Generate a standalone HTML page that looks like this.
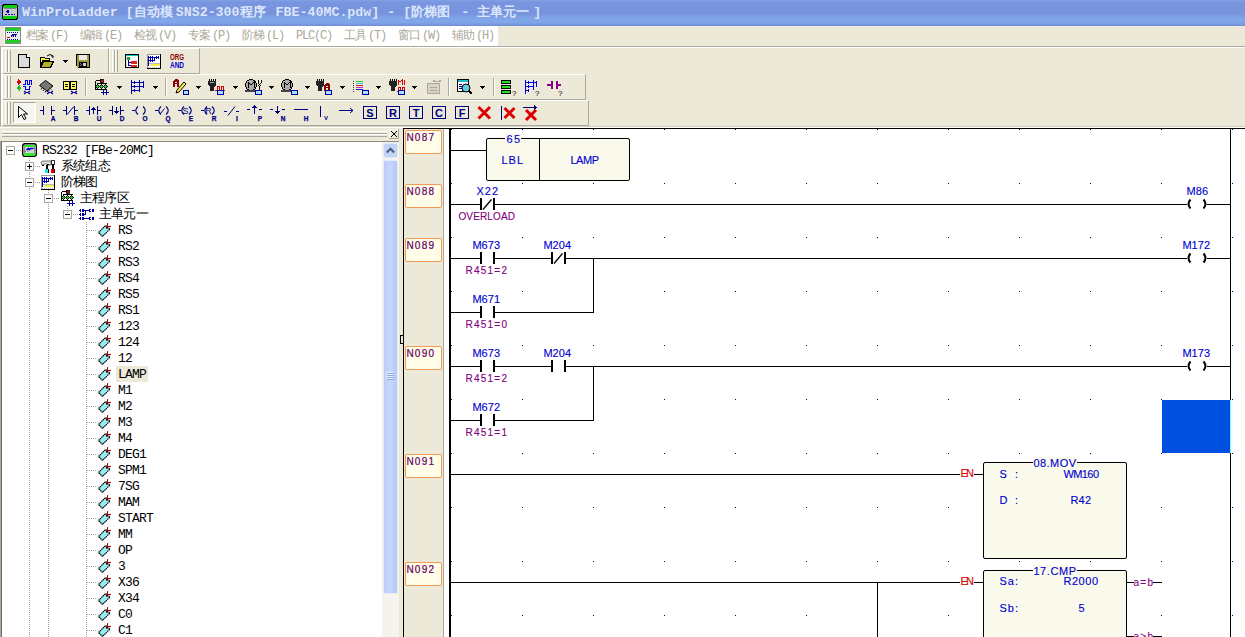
<!DOCTYPE html><html><head><meta charset="utf-8"><style>
*{margin:0;padding:0;box-sizing:border-box}
html,body{width:1245px;height:637px;overflow:hidden;background:#ece9d8;font-family:"Liberation Sans",sans-serif;position:relative}
div,svg,span.a{position:absolute}
span.cj{position:static;display:inline-block;overflow:hidden;vertical-align:top;white-space:nowrap}
svg{overflow:visible}
.tt{font:bold 13.3px/16px "Liberation Mono",monospace;color:#dbe6fa;white-space:pre}
.mi{top:26px;height:20px;font:12px/20px "Liberation Mono",monospace;color:#aca899;white-space:pre;letter-spacing:-1.2px}
.tb{border-top:1px solid #fff;border-left:1px solid #fff;border-right:1px solid #aca899;border-bottom:1px solid #aca899;background:#ece9d8}
.grip{width:4px;border-left:1px solid #fff;border-right:1px solid #aca899}
.sep{width:2px;border-left:1px solid #aca899;border-right:1px solid #fff}
.dd{width:0;height:0;border-left:3px solid transparent;border-right:3px solid transparent;border-top:3px solid #000}
.tr{height:16px;font:13px/16px "Liberation Mono",monospace;color:#000;white-space:pre;letter-spacing:-0.8px}
.lt{font-family:"Liberation Sans",sans-serif}
</style></head><body><div style="left:0px;top:0px;width:1245px;height:26px;background:linear-gradient(#82a2e6 0,#7a95df 2px,#7893dd 14px,#7ea2e6 17px,#80a8ea 22px,#7b9be0 24px,#6f8bd8 26px);"></div>
<svg style="left:2px;top:4px;" width="16" height="16" viewBox="0 0 16 16" shape-rendering="crispEdges"><rect x="0.5" y="0.5" width="15" height="15" rx="2.5" fill="#1c1" stroke="#000"/><rect x="1" y="4" width="14" height="8" fill="#c8c8c8"/><path d="M2 4h12" stroke="#888"/><path d="M4 7h3M5 6h1v2h-1" stroke="#00c" fill="none"/><path d="M3 10h10" stroke="#00c" stroke-dasharray="2 1"/></svg>
<div class="tt" style="left:22px;top:5px">WinProLadder [<span class="cj" style="width:42px">自动模</span>SNS2-300<span class="cj" style="width:28px">程序</span> FBE-40MC.pdw] - [<span class="cj" style="width:42px">阶梯图</span> - <span class="cj" style="width:56px">主单元一</span>]</div>
<div style="left:4px;top:26px;width:494px;height:20px;background:#fff;"></div>
<svg style="left:5px;top:27px;" width="16" height="17" viewBox="0 0 16 17" shape-rendering="crispEdges"><rect x="0.5" y="0.5" width="15" height="16" rx="1" fill="#eee" stroke="#888"/><rect x="1" y="1" width="14" height="3" fill="#2c2"/><rect x="1" y="13" width="14" height="3" fill="#2c2"/><path d="M2 5h12M2 12h12" stroke="#00a" stroke-dasharray="1 1"/><path d="M6 10l2-3h4M8 10v-2M10 10v-2" stroke="#00a" fill="none"/><path d="M2 10h3" stroke="#d00"/></svg>
<div class="mi" style="left:26px"><span class="cj" style="width:24px">档案</span>(F)</div>
<div class="mi" style="left:80px"><span class="cj" style="width:24px">编辑</span>(E)</div>
<div class="mi" style="left:134px"><span class="cj" style="width:24px">检视</span>(V)</div>
<div class="mi" style="left:188px"><span class="cj" style="width:24px">专案</span>(P)</div>
<div class="mi" style="left:242px"><span class="cj" style="width:24px">阶梯</span>(L)</div>
<div class="mi" style="left:296px">PLC(C)</div>
<div class="mi" style="left:344px"><span class="cj" style="width:24px">工具</span>(T)</div>
<div class="mi" style="left:398px"><span class="cj" style="width:24px">窗口</span>(W)</div>
<div class="mi" style="left:452px"><span class="cj" style="width:24px">辅助</span>(H)</div>
<div style="left:0px;top:46px;width:1245px;height:1px;background:#aca899;"></div>
<div style="left:0px;top:47px;width:1245px;height:1px;background:#fff;"></div>
<div style="left:0px;top:47px;width:1px;height:80px;background:#aca899;"></div>
<div style="left:1px;top:47px;width:1px;height:80px;background:#fff;"></div>
<div class="tb" style="left:2px;top:48px;width:107px;height:26px"></div>
<div style="left:5px;top:50px;width:1px;height:22px;background:#fff;"></div>
<div style="left:7px;top:50px;width:1px;height:22px;background:#aca899;"></div>
<div style="left:8px;top:50px;width:1px;height:22px;background:#fff;"></div>
<div style="left:10px;top:50px;width:1px;height:22px;background:#aca899;"></div>
<div class="tb" style="left:109px;top:48px;width:91px;height:26px"></div>
<div style="left:112px;top:50px;width:1px;height:22px;background:#fff;"></div>
<div style="left:114px;top:50px;width:1px;height:22px;background:#aca899;"></div>
<div style="left:115px;top:50px;width:1px;height:22px;background:#fff;"></div>
<div style="left:117px;top:50px;width:1px;height:22px;background:#aca899;"></div>
<div class="tb" style="left:2px;top:74px;width:584px;height:26px"></div>
<div style="left:5px;top:76px;width:1px;height:22px;background:#fff;"></div>
<div style="left:7px;top:76px;width:1px;height:22px;background:#aca899;"></div>
<div style="left:8px;top:76px;width:1px;height:22px;background:#fff;"></div>
<div style="left:10px;top:76px;width:1px;height:22px;background:#aca899;"></div>
<div class="tb" style="left:2px;top:100px;width:587px;height:26px"></div>
<div style="left:5px;top:102px;width:1px;height:22px;background:#fff;"></div>
<div style="left:7px;top:102px;width:1px;height:22px;background:#aca899;"></div>
<div style="left:8px;top:102px;width:1px;height:22px;background:#fff;"></div>
<div style="left:10px;top:102px;width:1px;height:22px;background:#aca899;"></div>
<div style="left:0px;top:126px;width:1245px;height:1px;background:#d8d2bd;"></div>
<div style="left:0px;top:127px;width:1245px;height:1px;background:#fff;"></div>
<svg style="left:18px;top:54px;" width="13" height="15" viewBox="0 0 13 15" shape-rendering="crispEdges"><path d="M0.5 0.5H8.5L11.5 3.5V13.5H0.5Z" fill="#d8d8d8" stroke="#000"/><path d="M2 3h1M4 5h1M2 7h1M6 7h1M4 9h1M8 9h1M2 11h1M6 11h1M8 6h1" stroke="#f4f4f4"/><path d="M8.5 1V3.5H11" fill="#fff" stroke="#000"/><path d="M9 1h1v1h1v1h-2z" fill="#fff"/><path d="M1 13.5h11M11.5 4v10" stroke="#000"/></svg>
<svg style="left:40px;top:54px;" width="16" height="16" viewBox="0 0 16 16" shape-rendering="crispEdges"><path d="M0.5 3.5h4l1 1h4v2h-7l-2 7z" fill="#ffff33" stroke="#000"/><path d="M0.5 13.5l3-6h10l-3 6z" fill="#b8b020" stroke="#000"/><path d="M7 2q3-3 6 0M12 1v2h2" stroke="#000" fill="none" shape-rendering="auto"/></svg>
<svg style="left:63px;top:60px;" width="5" height="3" viewBox="0 0 5 3" shape-rendering="crispEdges"><path d="M0 0h5v1h-1v1h-1v1h-1v-1h-1v-1h-1z" fill="#000"/></svg>
<svg style="left:76px;top:54px;" width="16" height="16" viewBox="0 0 16 16" shape-rendering="crispEdges"><path d="M0 0h14v14h-12l-2-2z" fill="#000"/><rect x="1" y="1" width="12" height="12" fill="#9c9a3c"/><rect x="3" y="1" width="8" height="5" fill="#e8e8e8"/><rect x="3" y="8" width="8" height="5" fill="#000"/><rect x="7" y="9" width="3" height="3" fill="#ccc"/><path d="M4 9h1M5 10h1M4 11h1" stroke="#888"/></svg>
<svg style="left:125px;top:54px;" width="16" height="16" viewBox="0 0 16 16" shape-rendering="crispEdges"><rect x="0.5" y="0.5" width="13" height="13" fill="#fff" stroke="#000"/><rect x="1" y="1" width="12" height="1" fill="#00c8c8"/><rect x="1" y="2" width="1" height="11" fill="#e0e0e0"/><rect x="2" y="3" width="3" height="3" fill="#22aa22"/><path d="M3.5 6v6M3.5 8.5h3M3.5 11.5h3" stroke="#0000aa" fill="none"/><rect x="6" y="7" width="6" height="3" fill="#dd2222"/><rect x="6" y="10.5" width="6" height="2.5" fill="#dd2222"/></svg>
<svg style="left:147px;top:54px;" width="14" height="15" viewBox="0 0 14 15" shape-rendering="crispEdges"><rect x="0" y="0" width="14" height="15" fill="#fff"/><path d="M0.5 0v14M0 0.5h13" stroke="#999"/><path d="M13.5 0v15M0 14.5h14" stroke="#000"/><path d="M1 13.5h12" stroke="#bbb" stroke-dasharray="1 1"/><path d="M1.5 2V12M1 3.5H12M3.5 2V5M5.5 2V5M9.5 2V5M11.5 2V5M1 6.5H7.5M7.5 3V7M3.5 5V8M5.5 5V8" stroke="#0000aa" fill="none"/><rect x="3" y="10" width="10" height="2" fill="#f0f050"/><path d="M2 9.5h11" stroke="#bbb"/></svg>
<svg style="left:169px;top:53px;" width="18" height="16" viewBox="0 0 18 16" shape-rendering="crispEdges"><g font-family="Liberation Sans" font-weight="bold" font-size="8.5" shape-rendering="auto"><text x="1" y="7" fill="#8b0000" textLength="14" lengthAdjust="spacingAndGlyphs">ORG</text><text x="1" y="15" fill="#0000cc" textLength="14" lengthAdjust="spacingAndGlyphs">AND</text></g></svg>
<svg style="left:16px;top:79px;" width="16" height="16" viewBox="0 0 16 16" shape-rendering="crispEdges"><path d="M1 3h3M3 1.5l2 1.5-2 1.5z" stroke="#dd0000" fill="#dd0000" stroke-width="1.3"/><path d="M2 9h3M3 7.5l-2 1.5 2 1.5z" stroke="#22bb22" fill="#22bb22" stroke-width="1.3"/><path d="M7 5.5h2v-4h2v4h2v-4h2v4" stroke="#0000ee" fill="none"/><path d="M7 7.5h2v3h4v-3h2" stroke="#0000ee" fill="none"/><path d="M8 12l2 1.5-2 1.5M14 12l-2 1.5 2 1.5M10 13.5h2" stroke="#000099" stroke-width="1.2" fill="none" shape-rendering="auto"/></svg>
<svg style="left:39px;top:79px;" width="16" height="16" viewBox="0 0 16 16" shape-rendering="crispEdges"><path d="M0.5 6.5l6-5 7.5 5.5-6 5z" fill="#777" stroke="#000" shape-rendering="auto"/><path d="M3 9l-1 1.5M5 10.5l-1 1.5M7 12l-1 1.5M9.5 11l1 1M11.5 9.5l1 1" stroke="#000" shape-rendering="auto"/><path d="M8 12l2 1.5-2 1.5M14 12l-2 1.5 2 1.5M10 13.5h2" stroke="#000099" stroke-width="1.2" fill="none" shape-rendering="auto"/></svg>
<svg style="left:63px;top:81px;" width="16" height="16" viewBox="0 0 16 16" shape-rendering="crispEdges"><path d="M0.5 0.5h6v8h-6zM7.5 0.5h6v8h-6z" fill="#ffff66" stroke="#000"/><path d="M2 3h3M2 5h3M9 3h3M9 5h3" stroke="#000"/><path d="M8 10l2 1.5-2 1.5M14 10l-2 1.5 2 1.5M10 11.5h2" stroke="#000099" stroke-width="1.2" fill="none" shape-rendering="auto"/></svg>
<div style="left:85px;top:78px;width:1px;height:18px;background:#aca899;"></div>
<div style="left:86px;top:78px;width:1px;height:18px;background:#fff;"></div>
<svg style="left:94px;top:79px;" width="16" height="16" viewBox="0 0 16 16" shape-rendering="crispEdges"><path d="M1.5 2v8.5h11M1.5 1.5h5M3 4.5h9.5M7.5 2.5v2M3.5 4.5v6M7.5 4.5v6M11.5 4.5v6" stroke="#000" fill="none"/><rect x="6" y="0" width="3" height="3" fill="#d00" stroke="#000" stroke-width="0.8"/><circle cx="3.5" cy="7.5" r="1.6" fill="#22cc22" stroke="#000"/><circle cx="7.5" cy="7.5" r="1.6" fill="#22cc22" stroke="#000"/><circle cx="11.5" cy="7.5" r="1.6" fill="#22cc22" stroke="#000"/><path d="M7 13.5h8M9.5 11v5M12.5 11v5" stroke="#000099"/></svg>
<svg style="left:117px;top:86px;" width="5" height="3" viewBox="0 0 5 3" shape-rendering="crispEdges"><path d="M0 0h5v1h-1v1h-1v1h-1v-1h-1v-1h-1z" fill="#000"/></svg>
<svg style="left:130px;top:79px;" width="16" height="16" viewBox="0 0 16 16" shape-rendering="crispEdges"><path d="M1 1v14M1 3h3M1 7h3M1 11h3M4 2v3M4 6v3M4 10v3M5 3h4M5 7h4M5 11h4M9 1v12M10 3h3M10 7h3M13 2v7" stroke="#0000aa" fill="none"/></svg>
<svg style="left:153px;top:86px;" width="5" height="3" viewBox="0 0 5 3" shape-rendering="crispEdges"><path d="M0 0h5v1h-1v1h-1v1h-1v-1h-1v-1h-1z" fill="#000"/></svg>
<div style="left:165px;top:78px;width:1px;height:18px;background:#aca899;"></div>
<div style="left:166px;top:78px;width:1px;height:18px;background:#fff;"></div>
<svg style="left:173px;top:79px;" width="16" height="16" viewBox="0 0 16 16" shape-rendering="crispEdges"><path d="M0 8V2l2-2h2l2 2v6h-2v-3h-2v3zM2 2.5v1h2v-1z" fill="#8b0000" fill-rule="evenodd"/><path d="M4 11l7-8 2 2-7 8-3 1z" fill="#ffee44" stroke="#000" shape-rendering="auto"/><rect x="10.5" y="11.5" width="5" height="4" fill="#aaddff" stroke="#000099"/></svg>
<svg style="left:196px;top:86px;" width="5" height="3" viewBox="0 0 5 3" shape-rendering="crispEdges"><path d="M0 0h5v1h-1v1h-1v1h-1v-1h-1v-1h-1z" fill="#000"/></svg>
<svg style="left:208px;top:79px;" width="18" height="16" viewBox="0 0 18 16" shape-rendering="crispEdges"><path d="M1 0v2M3 0v2M5 0v2M7 0v2" stroke="#000"/><path d="M0 2h8v4l-2 2v4h-4v-4l-2-2z" fill="#222"/><path d="M2 3h4" stroke="#aaa"/><path d="M7 11h2v-4h2v4h2v-4h2v4h2" stroke="#dd0000" fill="none"/><rect x="9.5" y="11.5" width="6" height="4" fill="#aaddff" stroke="#000099"/></svg>
<svg style="left:233px;top:86px;" width="5" height="3" viewBox="0 0 5 3" shape-rendering="crispEdges"><path d="M0 0h5v1h-1v1h-1v1h-1v-1h-1v-1h-1z" fill="#000"/></svg>
<svg style="left:245px;top:79px;" width="17" height="16" viewBox="0 0 17 16" shape-rendering="crispEdges"><circle cx="6" cy="6" r="5.5" fill="#aaa" stroke="#000"/><path d="M3 9v-6l3 3 3-3v6" stroke="#000" fill="none"/><rect x="0" y="11" width="12" height="2" fill="#444"/><path d="M13 1v3M16 1v3M13 4l3 3M16 4l-3 3M14.5 7v5" stroke="#000" fill="none"/><rect x="10.5" y="11.5" width="6" height="4" fill="#aaddff" stroke="#000099"/></svg>
<svg style="left:269px;top:86px;" width="5" height="3" viewBox="0 0 5 3" shape-rendering="crispEdges"><path d="M0 0h5v1h-1v1h-1v1h-1v-1h-1v-1h-1z" fill="#000"/></svg>
<svg style="left:281px;top:79px;" width="17" height="16" viewBox="0 0 17 16" shape-rendering="crispEdges"><circle cx="6" cy="6" r="5.5" fill="#aaa" stroke="#000"/><path d="M3 9v-6l3 3 3-3v6" stroke="#000" fill="none"/><rect x="0" y="11" width="12" height="2" fill="#444"/><rect x="10.5" y="11.5" width="6" height="4" fill="#aaddff" stroke="#000099"/></svg>
<svg style="left:305px;top:86px;" width="5" height="3" viewBox="0 0 5 3" shape-rendering="crispEdges"><path d="M0 0h5v1h-1v1h-1v1h-1v-1h-1v-1h-1z" fill="#000"/></svg>
<svg style="left:316px;top:79px;" width="16" height="16" viewBox="0 0 16 16" shape-rendering="crispEdges"><path d="M1 0v2M3 0v2M5 0v2M7 0v2" stroke="#000"/><path d="M0 2h8v4l-2 2v4h-4v-4l-2-2z" fill="#222"/><path d="M8 12V6l2-2h2l2 2v6h-2v-3h-2v3zM10 6.5v1h2v-1z" fill="#8b0000" fill-rule="evenodd"/><rect x="9.5" y="11.5" width="6" height="4" fill="#aaddff" stroke="#000099"/></svg>
<svg style="left:340px;top:86px;" width="5" height="3" viewBox="0 0 5 3" shape-rendering="crispEdges"><path d="M0 0h5v1h-1v1h-1v1h-1v-1h-1v-1h-1z" fill="#000"/></svg>
<svg style="left:353px;top:79px;" width="16" height="16" viewBox="0 0 16 16" shape-rendering="crispEdges"><path d="M0 2h1M0 4h1M0 6h1M0 8h1M0 10h1M0 12h1" stroke="#333"/><path d="M3 2h7" stroke="#22cc22"/><path d="M3 4h7" stroke="#22cccc"/><path d="M3 6h7" stroke="#dd2222"/><path d="M3 8h7" stroke="#cc22cc"/><path d="M3 10h7" stroke="#2222cc"/><rect x="9.5" y="11.5" width="6" height="4" fill="#aaddff" stroke="#000099"/></svg>
<svg style="left:376px;top:86px;" width="5" height="3" viewBox="0 0 5 3" shape-rendering="crispEdges"><path d="M0 0h5v1h-1v1h-1v1h-1v-1h-1v-1h-1z" fill="#000"/></svg>
<svg style="left:389px;top:79px;" width="17" height="16" viewBox="0 0 17 16" shape-rendering="crispEdges"><path d="M1 0v2M3 0v2M5 0v2M7 0v2" stroke="#000"/><path d="M0 2h8v4l-2 2v4h-4v-4l-2-2z" fill="#222"/><path d="M9 6v-5l2 2 2-2v5M15 1v5" stroke="#dd0000" fill="none"/><path d="M8 12h1v-4h2v4h2v-4h2v4h1" stroke="#dd0000" fill="none"/><rect x="9.5" y="11.5" width="6" height="4" fill="#aaddff" stroke="#000099"/></svg>
<svg style="left:412px;top:86px;" width="5" height="3" viewBox="0 0 5 3" shape-rendering="crispEdges"><path d="M0 0h5v1h-1v1h-1v1h-1v-1h-1v-1h-1z" fill="#000"/></svg>
<svg style="left:427px;top:79px;" width="16" height="16" viewBox="0 0 16 16" shape-rendering="crispEdges"><rect x="0.5" y="4.5" width="12" height="10" fill="#d8d4c4" stroke="#aca899"/><path d="M3 8h7M3 11h7" stroke="#aca899"/><path d="M6 1l2 1-2 1M14 1l-2 1 2 1M8 2h4" stroke="#aca899" fill="none"/></svg>
<div style="left:448px;top:78px;width:1px;height:18px;background:#aca899;"></div>
<div style="left:449px;top:78px;width:1px;height:18px;background:#fff;"></div>
<svg style="left:457px;top:79px;" width="16" height="16" viewBox="0 0 16 16" shape-rendering="crispEdges"><rect x="0.5" y="0.5" width="11" height="12" fill="#fff" stroke="#000"/><rect x="1" y="1" width="10" height="2" fill="#22bbcc"/><path d="M2 5h3M2 7h3M2 9h3" stroke="#0000aa"/><circle cx="9" cy="9" r="4" fill="#66ccdd" stroke="#000" shape-rendering="auto"/><path d="M12 12l3 3" stroke="#000" stroke-width="2"/></svg>
<svg style="left:480px;top:86px;" width="5" height="3" viewBox="0 0 5 3" shape-rendering="crispEdges"><path d="M0 0h5v1h-1v1h-1v1h-1v-1h-1v-1h-1z" fill="#000"/></svg>
<div style="left:493px;top:78px;width:1px;height:18px;background:#aca899;"></div>
<div style="left:494px;top:78px;width:1px;height:18px;background:#fff;"></div>
<svg style="left:501px;top:80px;" width="16" height="16" viewBox="0 0 16 16" shape-rendering="crispEdges"><rect x="0.5" y="0.5" width="9" height="3" fill="#22dd22" stroke="#000"/><rect x="0.5" y="5.5" width="9" height="3" fill="#22dd22" stroke="#000"/><rect x="0.5" y="10.5" width="9" height="3" fill="#22dd22" stroke="#000"/><text x="11" y="16" font-size="8" fill="#000" font-family="Liberation Sans" shape-rendering="auto">?</text></svg>
<svg style="left:524px;top:80px;" width="16" height="16" viewBox="0 0 16 16" shape-rendering="crispEdges"><path d="M1 0v14M1 2h3M1 6h3M1 10h3M4 1v3M4 5v3M4 9v3M5 2h4M5 6h4M9 0v10M10 2h2M12 1v6" stroke="#0000ee" fill="none"/><text x="11" y="16" font-size="8" fill="#000" font-family="Liberation Sans" shape-rendering="auto">?</text></svg>
<svg style="left:547px;top:80px;" width="16" height="16" viewBox="0 0 16 16" shape-rendering="crispEdges"><path d="M0 5h4M10 5h4M4.5 1v8M9.5 1v8" stroke="#8b008b" stroke-width="2" fill="none"/><text x="11" y="16" font-size="8" fill="#000" font-family="Liberation Sans" shape-rendering="auto">?</text></svg>
<div style="left:13px;top:102px;width:23px;height:21px;background:#f6f5f0;border-top:1px solid #aca899;border-left:1px solid #aca899;border-right:1px solid #fff;border-bottom:1px solid #fff"></div>
<svg style="left:18px;top:106px;" width="16" height="16" viewBox="0 0 16 16" shape-rendering="crispEdges"><path d="M0.5 0.5v11l3-3 2.5 5 2-1-2.5-4.5h4z" fill="#fff" stroke="#000" shape-rendering="auto"/></svg>
<svg style="left:40px;top:105px;" width="16" height="16" viewBox="0 0 16 16" shape-rendering="crispEdges"><path d="M0 5.5h3M11 5.5h4" stroke="#000080"/><rect x="3" y="1" width="1" height="9" fill="#000080"/><rect x="11" y="1" width="1" height="9" fill="#000080"/><text x="13" y="15.6" font-size="6.5" font-weight="bold" fill="#000080" text-anchor="middle" font-family="Liberation Sans" stroke="#000080" stroke-width="0.25">A</text></svg>
<svg style="left:63px;top:105px;" width="16" height="16" viewBox="0 0 16 16" shape-rendering="crispEdges"><path d="M0 5.5h3M11 5.5h4" stroke="#000080"/><rect x="3" y="1" width="1" height="9" fill="#000080"/><rect x="11" y="1" width="1" height="9" fill="#000080"/><path d="M4 9.5l7-8" stroke="#000080" shape-rendering="auto"/><text x="13" y="15.6" font-size="6.5" font-weight="bold" fill="#000080" text-anchor="middle" font-family="Liberation Sans" stroke="#000080" stroke-width="0.25">B</text></svg>
<svg style="left:86px;top:105px;" width="16" height="16" viewBox="0 0 16 16" shape-rendering="crispEdges"><path d="M0 5.5h3M11 5.5h4" stroke="#000080"/><rect x="3" y="1" width="1" height="9" fill="#000080"/><rect x="11" y="1" width="1" height="9" fill="#000080"/><path d="M7.5 3v6M5.5 5l2-2 2 2" stroke="#000080" fill="none"/><text x="13" y="15.6" font-size="6.5" font-weight="bold" fill="#000080" text-anchor="middle" font-family="Liberation Sans" stroke="#000080" stroke-width="0.25">U</text></svg>
<svg style="left:109px;top:105px;" width="16" height="16" viewBox="0 0 16 16" shape-rendering="crispEdges"><path d="M0 5.5h3M11 5.5h4" stroke="#000080"/><rect x="3" y="1" width="1" height="9" fill="#000080"/><rect x="11" y="1" width="1" height="9" fill="#000080"/><path d="M7.5 2v6M5.5 6l2 2 2-2" stroke="#000080" fill="none"/><text x="13" y="15.6" font-size="6.5" font-weight="bold" fill="#000080" text-anchor="middle" font-family="Liberation Sans" stroke="#000080" stroke-width="0.25">D</text></svg>
<svg style="left:132px;top:105px;" width="16" height="16" viewBox="0 0 16 16" shape-rendering="crispEdges"><path d="M0 5.5h3M6 1.5q-4.5 4 0 8M11 1.5q4.5 4 0 8" stroke="#000080" fill="none" stroke-width="1.2" shape-rendering="auto"/><text x="13" y="15.6" font-size="6.5" font-weight="bold" fill="#000080" text-anchor="middle" font-family="Liberation Sans" stroke="#000080" stroke-width="0.25">O</text></svg>
<svg style="left:155px;top:105px;" width="16" height="16" viewBox="0 0 16 16" shape-rendering="crispEdges"><path d="M0 5.5h3M6 1.5q-4.5 4 0 8M11 1.5q4.5 4 0 8" stroke="#000080" fill="none" stroke-width="1.2" shape-rendering="auto"/><path d="M5.5 8.5l4-5" stroke="#000080" shape-rendering="auto"/><text x="13" y="15.6" font-size="6.5" font-weight="bold" fill="#000080" text-anchor="middle" font-family="Liberation Sans" stroke="#000080" stroke-width="0.25">Q</text></svg>
<svg style="left:178px;top:105px;" width="16" height="16" viewBox="0 0 16 16" shape-rendering="crispEdges"><path d="M0 5.5h3M6 1.5q-4.5 4 0 8M11 1.5q4.5 4 0 8" stroke="#000080" fill="none" stroke-width="1.2" shape-rendering="auto"/><text x="7.5" y="9" font-size="9" fill="#000080" text-anchor="middle" font-family="Liberation Sans">S</text><text x="13" y="15.6" font-size="6.5" font-weight="bold" fill="#000080" text-anchor="middle" font-family="Liberation Sans" stroke="#000080" stroke-width="0.25">E</text></svg>
<svg style="left:201px;top:105px;" width="16" height="16" viewBox="0 0 16 16" shape-rendering="crispEdges"><path d="M0 5.5h3M6 1.5q-4.5 4 0 8M11 1.5q4.5 4 0 8" stroke="#000080" fill="none" stroke-width="1.2" shape-rendering="auto"/><text x="7.5" y="9" font-size="9" fill="#000080" text-anchor="middle" font-family="Liberation Sans">R</text><text x="13" y="15.6" font-size="6.5" font-weight="bold" fill="#000080" text-anchor="middle" font-family="Liberation Sans" stroke="#000080" stroke-width="0.25">R</text></svg>
<svg style="left:224px;top:105px;" width="16" height="16" viewBox="0 0 16 16" shape-rendering="crispEdges"><path d="M0 6.5h3M12 6.5h3" stroke="#000080"/><path d="M4 10.5l7-9" stroke="#000080" shape-rendering="auto"/><text x="13" y="15.6" font-size="6.5" font-weight="bold" fill="#000080" text-anchor="middle" font-family="Liberation Sans" stroke="#000080" stroke-width="0.25">I</text></svg>
<svg style="left:247px;top:105px;" width="16" height="16" viewBox="0 0 16 16" shape-rendering="crispEdges"><path d="M0 4.5h3M12 4.5h3M7.5 1v8M5.5 3l2-2 2 2" stroke="#000080" fill="none"/><text x="13" y="15.6" font-size="6.5" font-weight="bold" fill="#000080" text-anchor="middle" font-family="Liberation Sans" stroke="#000080" stroke-width="0.25">P</text></svg>
<svg style="left:270px;top:105px;" width="16" height="16" viewBox="0 0 16 16" shape-rendering="crispEdges"><path d="M0 4.5h3M12 4.5h3M7.5 1v7M5.5 6l2 2 2-2" stroke="#000080" fill="none"/><text x="13" y="15.6" font-size="6.5" font-weight="bold" fill="#000080" text-anchor="middle" font-family="Liberation Sans" stroke="#000080" stroke-width="0.25">N</text></svg>
<svg style="left:293px;top:105px;" width="16" height="16" viewBox="0 0 16 16" shape-rendering="crispEdges"><path d="M1 4.5h14" stroke="#000080"/><text x="13" y="15.6" font-size="6.5" font-weight="bold" fill="#000080" text-anchor="middle" font-family="Liberation Sans" stroke="#000080" stroke-width="0.25">H</text></svg>
<svg style="left:316px;top:105px;" width="16" height="16" viewBox="0 0 16 16" shape-rendering="crispEdges"><path d="M4.5 1v11" stroke="#000080"/><text x="10" y="14.5" font-size="6" font-weight="bold" fill="#000080" text-anchor="middle" font-family="Liberation Sans">V</text></svg>
<svg style="left:339px;top:105px;" width="16" height="16" viewBox="0 0 16 16" shape-rendering="crispEdges"><path d="M0 5.5h14M11 3l3 2.5-3 2.5" stroke="#000080" fill="none" shape-rendering="auto"/></svg>
<svg style="left:362px;top:105px;" width="16" height="16" viewBox="0 0 16 16" shape-rendering="crispEdges"><rect x="1.5" y="1.5" width="13" height="12" fill="none" stroke="#000080"/><text x="8" y="12" font-size="11" font-weight="bold" fill="#000080" text-anchor="middle" font-family="Liberation Sans">S</text></svg>
<svg style="left:385px;top:105px;" width="16" height="16" viewBox="0 0 16 16" shape-rendering="crispEdges"><rect x="1.5" y="1.5" width="13" height="12" fill="none" stroke="#000080"/><text x="8" y="12" font-size="11" font-weight="bold" fill="#000080" text-anchor="middle" font-family="Liberation Sans">R</text></svg>
<svg style="left:408px;top:105px;" width="16" height="16" viewBox="0 0 16 16" shape-rendering="crispEdges"><rect x="1.5" y="1.5" width="13" height="12" fill="none" stroke="#000080"/><text x="8" y="12" font-size="11" font-weight="bold" fill="#000080" text-anchor="middle" font-family="Liberation Sans">T</text></svg>
<svg style="left:431px;top:105px;" width="16" height="16" viewBox="0 0 16 16" shape-rendering="crispEdges"><rect x="1.5" y="1.5" width="13" height="12" fill="none" stroke="#000080"/><text x="8" y="12" font-size="11" font-weight="bold" fill="#000080" text-anchor="middle" font-family="Liberation Sans">C</text></svg>
<svg style="left:454px;top:105px;" width="16" height="16" viewBox="0 0 16 16" shape-rendering="crispEdges"><rect x="1.5" y="1.5" width="13" height="12" fill="none" stroke="#000080"/><text x="8" y="12" font-size="11" font-weight="bold" fill="#000080" text-anchor="middle" font-family="Liberation Sans">F</text></svg>
<svg style="left:477px;top:105px;" width="16" height="16" viewBox="0 0 16 16" shape-rendering="crispEdges"><path d="M1.5 2l11.5 11.5M13 2l-11.5 11.5" stroke="#dd0000" stroke-width="3" shape-rendering="auto"/></svg>
<svg style="left:500px;top:105px;" width="16" height="16" viewBox="0 0 16 16" shape-rendering="crispEdges"><path d="M1.5 1v14" stroke="#000080"/><path d="M4.5 3l10 10M14.5 3l-10 10" stroke="#dd0000" stroke-width="3" shape-rendering="auto"/></svg>
<svg style="left:523px;top:105px;" width="16" height="16" viewBox="0 0 16 16" shape-rendering="crispEdges"><path d="M0 2.5h13M11 0.5l2 2-2 2" stroke="#000080" fill="none"/><path d="M3 5l10 10M13 5l-10 10" stroke="#dd0000" stroke-width="3" shape-rendering="auto"/></svg>
<div style="left:0px;top:128px;width:400px;height:13px;background:#ece9d8;"></div>
<div style="left:2px;top:131px;width:385px;height:1px;background:#fff;"></div>
<div style="left:2px;top:133px;width:385px;height:1px;background:#aca899;"></div>
<div style="left:2px;top:134px;width:385px;height:1px;background:#fff;"></div>
<div style="left:2px;top:136px;width:385px;height:1px;background:#aca899;"></div>
<svg style="left:389px;top:129px;" width="10" height="10" viewBox="0 0 10 10" shape-rendering="crispEdges"><rect x="0" y="0" width="10" height="10" fill="#ece9d8"/><path d="M0 0h9M0 0v9" stroke="#fff" fill="none"/><path d="M9.5 0v10M0 9.5h10" stroke="#aca899" fill="none"/><rect x="2" y="2" width="1" height="1" fill="#000"/><rect x="7" y="2" width="1" height="1" fill="#000"/><rect x="3" y="3" width="1" height="1" fill="#000"/><rect x="6" y="3" width="1" height="1" fill="#000"/><rect x="4" y="4" width="1" height="1" fill="#000"/><rect x="5" y="4" width="1" height="1" fill="#000"/><rect x="5" y="5" width="1" height="1" fill="#000"/><rect x="4" y="5" width="1" height="1" fill="#000"/><rect x="6" y="6" width="1" height="1" fill="#000"/><rect x="3" y="6" width="1" height="1" fill="#000"/><rect x="7" y="7" width="1" height="1" fill="#000"/><rect x="2" y="7" width="1" height="1" fill="#000"/></svg>
<div style="left:0px;top:142px;width:381px;height:495px;background:#fff;"></div>
<div style="left:0px;top:141px;width:1px;height:496px;background:#aca899;"></div>
<div style="left:1px;top:141px;width:1px;height:496px;background:#716f64;"></div>
<svg style="left:0;top:0" width="400" height="637" viewBox="0 0 400 637" shape-rendering="crispEdges"><defs><clipPath id="tc"><rect x="2" y="142" width="379" height="495"/></clipPath></defs><g clip-path="url(#tc)"><rect x="6.5" y="146.5" width="8" height="8" fill="#fff" stroke="#aca899"/><path d="M8 150.5h5" stroke="#000"/><path d="M16 150.5H22" stroke="#a0a0a0" stroke-dasharray="1 1"/><g transform="translate(22,143)"><rect x="0.7" y="0.7" width="13.6" height="12.6" rx="2.2" fill="#fff" stroke="#000" stroke-width="1.4" shape-rendering="auto"/><rect x="2" y="1.5" width="11" height="2.5" fill="#33e633"/><rect x="2" y="4" width="11" height="6" fill="#d4d4d4"/><path d="M2.5 4v6M12.5 4v6" stroke="#888"/><path d="M4.5 7l2-1.5 1 1 1-1h3" stroke="#0000ee" stroke-width="1.6" fill="none" shape-rendering="auto"/><rect x="2" y="8" width="2" height="1" fill="#d44"/><rect x="5" y="8" width="2" height="1" fill="#5dd"/><rect x="2" y="10" width="11" height="2.5" fill="#33e633"/></g><path d="M29.5 158V637" stroke="#a0a0a0" stroke-dasharray="1 1"/><rect x="25.5" y="162.5" width="8" height="8" fill="#fff" stroke="#aca899"/><path d="M27 166.5h5" stroke="#000"/><path d="M29.5 164v5" stroke="#000"/><path d="M35 166.5H41" stroke="#a0a0a0" stroke-dasharray="1 1"/><g transform="translate(41,160)"><path d="M0 2l2-1h8v4h-3l-1-1h-3l-1 1h-1z" fill="#e0e0e0" stroke="#555" stroke-width="0.8" shape-rendering="auto"/><path d="M1 5h2M6 4h2" stroke="#000"/><rect x="10" y="0" width="3" height="4" fill="#fff" stroke="#000" stroke-width="0.8"/><rect x="5" y="5" width="2" height="4" fill="#000"/><rect x="11" y="4" width="2" height="5" fill="#000"/><rect x="4" y="9" width="3" height="4" fill="#22e0e8"/><rect x="7" y="9" width="1" height="4" fill="#000"/><rect x="10" y="9" width="3" height="4" fill="#dd0000"/><rect x="13" y="9" width="1" height="4" fill="#400"/></g><rect x="25.5" y="178.5" width="8" height="8" fill="#fff" stroke="#aca899"/><path d="M27 182.5h5" stroke="#000"/><path d="M35 182.5H41" stroke="#a0a0a0" stroke-dasharray="1 1"/><g transform="translate(41,175)"><rect x="0" y="0" width="14" height="15" fill="#fff"/><path d="M0.5 0v14M0 0.5h13" stroke="#999"/><path d="M13.5 0v15M0 14.5h14" stroke="#000"/><path d="M1 13.5h12" stroke="#bbb" stroke-dasharray="1 1"/><path d="M1.5 2V12M1 3.5H12M3.5 2V5M5.5 2V5M9.5 2V5M11.5 2V5M1 6.5H7.5M7.5 3V7M3.5 5V8M5.5 5V8" stroke="#0000aa" fill="none"/><rect x="3" y="10" width="10" height="2" fill="#f0f050"/><path d="M2 9.5h11" stroke="#bbb"/></g><path d="M48.5 190V637" stroke="#a0a0a0" stroke-dasharray="1 1"/><rect x="44.5" y="194.5" width="8" height="8" fill="#fff" stroke="#aca899"/><path d="M46 198.5h5" stroke="#000"/><path d="M54 198.5H60" stroke="#a0a0a0" stroke-dasharray="1 1"/><g transform="translate(60,190)"><path d="M1.5 2v8.5h11M1.5 1.5h5M3 4.5h9.5M7.5 2.5v2M3.5 4.5v6M7.5 4.5v6M11.5 4.5v6" stroke="#000" fill="none"/><rect x="6" y="0" width="3" height="3" fill="#d00" stroke="#000" stroke-width="0.8"/><circle cx="3.5" cy="7.5" r="1.6" fill="#22cc22" stroke="#000"/><circle cx="7.5" cy="7.5" r="1.6" fill="#22cc22" stroke="#000"/><circle cx="11.5" cy="7.5" r="1.6" fill="#22cc22" stroke="#000"/><path d="M7 13.5h8M9.5 11v5M12.5 11v5" stroke="#000099"/></g><rect x="63.5" y="210.5" width="8" height="8" fill="#fff" stroke="#aca899"/><path d="M65 214.5h5" stroke="#000"/><path d="M73 214.5H79" stroke="#a0a0a0" stroke-dasharray="1 1"/><g transform="translate(79,209)"><g stroke="#000099" fill="none" stroke-width="1.4"><path d="M1.5 0v3M1.5 4v3M1.5 8v3M0 1.5h1M0 5.5h1M0 9.5h1M4 0v3M4 4v3M4 8v3M4 1.5h7M4 5.5h2.5M6.5 1.5v4M4 9.5h7M11.5 0.5h-1v2h1M13 0.5h1v2h-1M11.5 8.5h-1v2h1M13 8.5h1v2h-1"/></g></g><path d="M67.5 206V214" stroke="#a0a0a0" stroke-dasharray="1 1"/><path d="M86.5 222V637" stroke="#a0a0a0" stroke-dasharray="1 1"/><path d="M87 230.5H96" stroke="#a0a0a0" stroke-dasharray="1 1"/><g transform="translate(97,223)"><g shape-rendering="auto"><path d="M1.5 9.5L8.5 2.5L13 6L5.5 13.5Z" fill="#80eaf0" stroke="#000" stroke-width="1.2" stroke-dasharray="1.4 0.6"/><path d="M4 10l5-5M6 11l5-5" stroke="#c8f8f8" stroke-width="0.8"/><path d="M10.5 0v5M10 3.5h4" stroke="#c00000" stroke-width="1"/><circle cx="10" cy="4.8" r="1.1" fill="#500"/></g></g><path d="M87 246.5H96" stroke="#a0a0a0" stroke-dasharray="1 1"/><g transform="translate(97,239)"><g shape-rendering="auto"><path d="M1.5 9.5L8.5 2.5L13 6L5.5 13.5Z" fill="#80eaf0" stroke="#000" stroke-width="1.2" stroke-dasharray="1.4 0.6"/><path d="M4 10l5-5M6 11l5-5" stroke="#c8f8f8" stroke-width="0.8"/><path d="M10.5 0v5M10 3.5h4" stroke="#c00000" stroke-width="1"/><circle cx="10" cy="4.8" r="1.1" fill="#500"/></g></g><path d="M87 262.5H96" stroke="#a0a0a0" stroke-dasharray="1 1"/><g transform="translate(97,255)"><g shape-rendering="auto"><path d="M1.5 9.5L8.5 2.5L13 6L5.5 13.5Z" fill="#80eaf0" stroke="#000" stroke-width="1.2" stroke-dasharray="1.4 0.6"/><path d="M4 10l5-5M6 11l5-5" stroke="#c8f8f8" stroke-width="0.8"/><path d="M10.5 0v5M10 3.5h4" stroke="#c00000" stroke-width="1"/><circle cx="10" cy="4.8" r="1.1" fill="#500"/></g></g><path d="M87 278.5H96" stroke="#a0a0a0" stroke-dasharray="1 1"/><g transform="translate(97,271)"><g shape-rendering="auto"><path d="M1.5 9.5L8.5 2.5L13 6L5.5 13.5Z" fill="#80eaf0" stroke="#000" stroke-width="1.2" stroke-dasharray="1.4 0.6"/><path d="M4 10l5-5M6 11l5-5" stroke="#c8f8f8" stroke-width="0.8"/><path d="M10.5 0v5M10 3.5h4" stroke="#c00000" stroke-width="1"/><circle cx="10" cy="4.8" r="1.1" fill="#500"/></g></g><path d="M87 294.5H96" stroke="#a0a0a0" stroke-dasharray="1 1"/><g transform="translate(97,287)"><g shape-rendering="auto"><path d="M1.5 9.5L8.5 2.5L13 6L5.5 13.5Z" fill="#80eaf0" stroke="#000" stroke-width="1.2" stroke-dasharray="1.4 0.6"/><path d="M4 10l5-5M6 11l5-5" stroke="#c8f8f8" stroke-width="0.8"/><path d="M10.5 0v5M10 3.5h4" stroke="#c00000" stroke-width="1"/><circle cx="10" cy="4.8" r="1.1" fill="#500"/></g></g><path d="M87 310.5H96" stroke="#a0a0a0" stroke-dasharray="1 1"/><g transform="translate(97,303)"><g shape-rendering="auto"><path d="M1.5 9.5L8.5 2.5L13 6L5.5 13.5Z" fill="#80eaf0" stroke="#000" stroke-width="1.2" stroke-dasharray="1.4 0.6"/><path d="M4 10l5-5M6 11l5-5" stroke="#c8f8f8" stroke-width="0.8"/><path d="M10.5 0v5M10 3.5h4" stroke="#c00000" stroke-width="1"/><circle cx="10" cy="4.8" r="1.1" fill="#500"/></g></g><path d="M87 326.5H96" stroke="#a0a0a0" stroke-dasharray="1 1"/><g transform="translate(97,319)"><g shape-rendering="auto"><path d="M1.5 9.5L8.5 2.5L13 6L5.5 13.5Z" fill="#80eaf0" stroke="#000" stroke-width="1.2" stroke-dasharray="1.4 0.6"/><path d="M4 10l5-5M6 11l5-5" stroke="#c8f8f8" stroke-width="0.8"/><path d="M10.5 0v5M10 3.5h4" stroke="#c00000" stroke-width="1"/><circle cx="10" cy="4.8" r="1.1" fill="#500"/></g></g><path d="M87 342.5H96" stroke="#a0a0a0" stroke-dasharray="1 1"/><g transform="translate(97,335)"><g shape-rendering="auto"><path d="M1.5 9.5L8.5 2.5L13 6L5.5 13.5Z" fill="#80eaf0" stroke="#000" stroke-width="1.2" stroke-dasharray="1.4 0.6"/><path d="M4 10l5-5M6 11l5-5" stroke="#c8f8f8" stroke-width="0.8"/><path d="M10.5 0v5M10 3.5h4" stroke="#c00000" stroke-width="1"/><circle cx="10" cy="4.8" r="1.1" fill="#500"/></g></g><path d="M87 358.5H96" stroke="#a0a0a0" stroke-dasharray="1 1"/><g transform="translate(97,351)"><g shape-rendering="auto"><path d="M1.5 9.5L8.5 2.5L13 6L5.5 13.5Z" fill="#80eaf0" stroke="#000" stroke-width="1.2" stroke-dasharray="1.4 0.6"/><path d="M4 10l5-5M6 11l5-5" stroke="#c8f8f8" stroke-width="0.8"/><path d="M10.5 0v5M10 3.5h4" stroke="#c00000" stroke-width="1"/><circle cx="10" cy="4.8" r="1.1" fill="#500"/></g></g><path d="M87 374.5H96" stroke="#a0a0a0" stroke-dasharray="1 1"/><g transform="translate(97,367)"><g shape-rendering="auto"><path d="M1.5 9.5L8.5 2.5L13 6L5.5 13.5Z" fill="#80eaf0" stroke="#000" stroke-width="1.2" stroke-dasharray="1.4 0.6"/><path d="M4 10l5-5M6 11l5-5" stroke="#c8f8f8" stroke-width="0.8"/><path d="M10.5 0v5M10 3.5h4" stroke="#c00000" stroke-width="1"/><circle cx="10" cy="4.8" r="1.1" fill="#500"/></g></g><path d="M87 390.5H96" stroke="#a0a0a0" stroke-dasharray="1 1"/><g transform="translate(97,383)"><g shape-rendering="auto"><path d="M1.5 9.5L8.5 2.5L13 6L5.5 13.5Z" fill="#80eaf0" stroke="#000" stroke-width="1.2" stroke-dasharray="1.4 0.6"/><path d="M4 10l5-5M6 11l5-5" stroke="#c8f8f8" stroke-width="0.8"/><path d="M10.5 0v5M10 3.5h4" stroke="#c00000" stroke-width="1"/><circle cx="10" cy="4.8" r="1.1" fill="#500"/></g></g><path d="M87 406.5H96" stroke="#a0a0a0" stroke-dasharray="1 1"/><g transform="translate(97,399)"><g shape-rendering="auto"><path d="M1.5 9.5L8.5 2.5L13 6L5.5 13.5Z" fill="#80eaf0" stroke="#000" stroke-width="1.2" stroke-dasharray="1.4 0.6"/><path d="M4 10l5-5M6 11l5-5" stroke="#c8f8f8" stroke-width="0.8"/><path d="M10.5 0v5M10 3.5h4" stroke="#c00000" stroke-width="1"/><circle cx="10" cy="4.8" r="1.1" fill="#500"/></g></g><path d="M87 422.5H96" stroke="#a0a0a0" stroke-dasharray="1 1"/><g transform="translate(97,415)"><g shape-rendering="auto"><path d="M1.5 9.5L8.5 2.5L13 6L5.5 13.5Z" fill="#80eaf0" stroke="#000" stroke-width="1.2" stroke-dasharray="1.4 0.6"/><path d="M4 10l5-5M6 11l5-5" stroke="#c8f8f8" stroke-width="0.8"/><path d="M10.5 0v5M10 3.5h4" stroke="#c00000" stroke-width="1"/><circle cx="10" cy="4.8" r="1.1" fill="#500"/></g></g><path d="M87 438.5H96" stroke="#a0a0a0" stroke-dasharray="1 1"/><g transform="translate(97,431)"><g shape-rendering="auto"><path d="M1.5 9.5L8.5 2.5L13 6L5.5 13.5Z" fill="#80eaf0" stroke="#000" stroke-width="1.2" stroke-dasharray="1.4 0.6"/><path d="M4 10l5-5M6 11l5-5" stroke="#c8f8f8" stroke-width="0.8"/><path d="M10.5 0v5M10 3.5h4" stroke="#c00000" stroke-width="1"/><circle cx="10" cy="4.8" r="1.1" fill="#500"/></g></g><path d="M87 454.5H96" stroke="#a0a0a0" stroke-dasharray="1 1"/><g transform="translate(97,447)"><g shape-rendering="auto"><path d="M1.5 9.5L8.5 2.5L13 6L5.5 13.5Z" fill="#80eaf0" stroke="#000" stroke-width="1.2" stroke-dasharray="1.4 0.6"/><path d="M4 10l5-5M6 11l5-5" stroke="#c8f8f8" stroke-width="0.8"/><path d="M10.5 0v5M10 3.5h4" stroke="#c00000" stroke-width="1"/><circle cx="10" cy="4.8" r="1.1" fill="#500"/></g></g><path d="M87 470.5H96" stroke="#a0a0a0" stroke-dasharray="1 1"/><g transform="translate(97,463)"><g shape-rendering="auto"><path d="M1.5 9.5L8.5 2.5L13 6L5.5 13.5Z" fill="#80eaf0" stroke="#000" stroke-width="1.2" stroke-dasharray="1.4 0.6"/><path d="M4 10l5-5M6 11l5-5" stroke="#c8f8f8" stroke-width="0.8"/><path d="M10.5 0v5M10 3.5h4" stroke="#c00000" stroke-width="1"/><circle cx="10" cy="4.8" r="1.1" fill="#500"/></g></g><path d="M87 486.5H96" stroke="#a0a0a0" stroke-dasharray="1 1"/><g transform="translate(97,479)"><g shape-rendering="auto"><path d="M1.5 9.5L8.5 2.5L13 6L5.5 13.5Z" fill="#80eaf0" stroke="#000" stroke-width="1.2" stroke-dasharray="1.4 0.6"/><path d="M4 10l5-5M6 11l5-5" stroke="#c8f8f8" stroke-width="0.8"/><path d="M10.5 0v5M10 3.5h4" stroke="#c00000" stroke-width="1"/><circle cx="10" cy="4.8" r="1.1" fill="#500"/></g></g><path d="M87 502.5H96" stroke="#a0a0a0" stroke-dasharray="1 1"/><g transform="translate(97,495)"><g shape-rendering="auto"><path d="M1.5 9.5L8.5 2.5L13 6L5.5 13.5Z" fill="#80eaf0" stroke="#000" stroke-width="1.2" stroke-dasharray="1.4 0.6"/><path d="M4 10l5-5M6 11l5-5" stroke="#c8f8f8" stroke-width="0.8"/><path d="M10.5 0v5M10 3.5h4" stroke="#c00000" stroke-width="1"/><circle cx="10" cy="4.8" r="1.1" fill="#500"/></g></g><path d="M87 518.5H96" stroke="#a0a0a0" stroke-dasharray="1 1"/><g transform="translate(97,511)"><g shape-rendering="auto"><path d="M1.5 9.5L8.5 2.5L13 6L5.5 13.5Z" fill="#80eaf0" stroke="#000" stroke-width="1.2" stroke-dasharray="1.4 0.6"/><path d="M4 10l5-5M6 11l5-5" stroke="#c8f8f8" stroke-width="0.8"/><path d="M10.5 0v5M10 3.5h4" stroke="#c00000" stroke-width="1"/><circle cx="10" cy="4.8" r="1.1" fill="#500"/></g></g><path d="M87 534.5H96" stroke="#a0a0a0" stroke-dasharray="1 1"/><g transform="translate(97,527)"><g shape-rendering="auto"><path d="M1.5 9.5L8.5 2.5L13 6L5.5 13.5Z" fill="#80eaf0" stroke="#000" stroke-width="1.2" stroke-dasharray="1.4 0.6"/><path d="M4 10l5-5M6 11l5-5" stroke="#c8f8f8" stroke-width="0.8"/><path d="M10.5 0v5M10 3.5h4" stroke="#c00000" stroke-width="1"/><circle cx="10" cy="4.8" r="1.1" fill="#500"/></g></g><path d="M87 550.5H96" stroke="#a0a0a0" stroke-dasharray="1 1"/><g transform="translate(97,543)"><g shape-rendering="auto"><path d="M1.5 9.5L8.5 2.5L13 6L5.5 13.5Z" fill="#80eaf0" stroke="#000" stroke-width="1.2" stroke-dasharray="1.4 0.6"/><path d="M4 10l5-5M6 11l5-5" stroke="#c8f8f8" stroke-width="0.8"/><path d="M10.5 0v5M10 3.5h4" stroke="#c00000" stroke-width="1"/><circle cx="10" cy="4.8" r="1.1" fill="#500"/></g></g><path d="M87 566.5H96" stroke="#a0a0a0" stroke-dasharray="1 1"/><g transform="translate(97,559)"><g shape-rendering="auto"><path d="M1.5 9.5L8.5 2.5L13 6L5.5 13.5Z" fill="#80eaf0" stroke="#000" stroke-width="1.2" stroke-dasharray="1.4 0.6"/><path d="M4 10l5-5M6 11l5-5" stroke="#c8f8f8" stroke-width="0.8"/><path d="M10.5 0v5M10 3.5h4" stroke="#c00000" stroke-width="1"/><circle cx="10" cy="4.8" r="1.1" fill="#500"/></g></g><path d="M87 582.5H96" stroke="#a0a0a0" stroke-dasharray="1 1"/><g transform="translate(97,575)"><g shape-rendering="auto"><path d="M1.5 9.5L8.5 2.5L13 6L5.5 13.5Z" fill="#80eaf0" stroke="#000" stroke-width="1.2" stroke-dasharray="1.4 0.6"/><path d="M4 10l5-5M6 11l5-5" stroke="#c8f8f8" stroke-width="0.8"/><path d="M10.5 0v5M10 3.5h4" stroke="#c00000" stroke-width="1"/><circle cx="10" cy="4.8" r="1.1" fill="#500"/></g></g><path d="M87 598.5H96" stroke="#a0a0a0" stroke-dasharray="1 1"/><g transform="translate(97,591)"><g shape-rendering="auto"><path d="M1.5 9.5L8.5 2.5L13 6L5.5 13.5Z" fill="#80eaf0" stroke="#000" stroke-width="1.2" stroke-dasharray="1.4 0.6"/><path d="M4 10l5-5M6 11l5-5" stroke="#c8f8f8" stroke-width="0.8"/><path d="M10.5 0v5M10 3.5h4" stroke="#c00000" stroke-width="1"/><circle cx="10" cy="4.8" r="1.1" fill="#500"/></g></g><path d="M87 614.5H96" stroke="#a0a0a0" stroke-dasharray="1 1"/><g transform="translate(97,607)"><g shape-rendering="auto"><path d="M1.5 9.5L8.5 2.5L13 6L5.5 13.5Z" fill="#80eaf0" stroke="#000" stroke-width="1.2" stroke-dasharray="1.4 0.6"/><path d="M4 10l5-5M6 11l5-5" stroke="#c8f8f8" stroke-width="0.8"/><path d="M10.5 0v5M10 3.5h4" stroke="#c00000" stroke-width="1"/><circle cx="10" cy="4.8" r="1.1" fill="#500"/></g></g><path d="M87 630.5H96" stroke="#a0a0a0" stroke-dasharray="1 1"/><g transform="translate(97,623)"><g shape-rendering="auto"><path d="M1.5 9.5L8.5 2.5L13 6L5.5 13.5Z" fill="#80eaf0" stroke="#000" stroke-width="1.2" stroke-dasharray="1.4 0.6"/><path d="M4 10l5-5M6 11l5-5" stroke="#c8f8f8" stroke-width="0.8"/><path d="M10.5 0v5M10 3.5h4" stroke="#c00000" stroke-width="1"/><circle cx="10" cy="4.8" r="1.1" fill="#500"/></g></g><path d="M87 646.5H96" stroke="#a0a0a0" stroke-dasharray="1 1"/><g transform="translate(97,639)"><g shape-rendering="auto"><path d="M1.5 9.5L8.5 2.5L13 6L5.5 13.5Z" fill="#80eaf0" stroke="#000" stroke-width="1.2" stroke-dasharray="1.4 0.6"/><path d="M4 10l5-5M6 11l5-5" stroke="#c8f8f8" stroke-width="0.8"/><path d="M10.5 0v5M10 3.5h4" stroke="#c00000" stroke-width="1"/><circle cx="10" cy="4.8" r="1.1" fill="#500"/></g></g></g></svg>
<div class="tr" style="left:42px;top:143px">RS232 [FBe-20MC]</div>
<div class="tr" style="left:61px;top:159px"><span class="cj" style="width:52px">系统组态</span></div>
<div class="tr" style="left:61px;top:175px"><span class="cj" style="width:39px">阶梯图</span></div>
<div class="tr" style="left:80px;top:191px"><span class="cj" style="width:52px">主程序区</span></div>
<div class="tr" style="left:99px;top:207px"><span class="cj" style="width:52px">主单元一</span></div>
<div class="tr" style="left:118px;top:223px">RS</div>
<div class="tr" style="left:118px;top:239px">RS2</div>
<div class="tr" style="left:118px;top:255px">RS3</div>
<div class="tr" style="left:118px;top:271px">RS4</div>
<div class="tr" style="left:118px;top:287px">RS5</div>
<div class="tr" style="left:118px;top:303px">RS1</div>
<div class="tr" style="left:118px;top:319px">123</div>
<div class="tr" style="left:118px;top:335px">124</div>
<div class="tr" style="left:118px;top:351px">12</div>
<div style="left:116px;top:366px;width:32px;height:16px;background:#ece9d8"></div>
<div class="tr" style="left:118px;top:367px">LAMP</div>
<div class="tr" style="left:118px;top:383px">M1</div>
<div class="tr" style="left:118px;top:399px">M2</div>
<div class="tr" style="left:118px;top:415px">M3</div>
<div class="tr" style="left:118px;top:431px">M4</div>
<div class="tr" style="left:118px;top:447px">DEG1</div>
<div class="tr" style="left:118px;top:463px">SPM1</div>
<div class="tr" style="left:118px;top:479px">7SG</div>
<div class="tr" style="left:118px;top:495px">MAM</div>
<div class="tr" style="left:118px;top:511px">START</div>
<div class="tr" style="left:118px;top:527px">MM</div>
<div class="tr" style="left:118px;top:543px">OP</div>
<div class="tr" style="left:118px;top:559px">3</div>
<div class="tr" style="left:118px;top:575px">X36</div>
<div class="tr" style="left:118px;top:591px">X34</div>
<div class="tr" style="left:118px;top:607px">C0</div>
<div class="tr" style="left:118px;top:623px">C1</div>
<div class="tr" style="left:118px;top:639px">C2</div>
<div style="left:381px;top:142px;width:18px;height:495px;background:#f4f3ee;border-left:1px solid #fdfdfb"></div>
<svg style="left:383px;top:143px;" width="15" height="15" viewBox="0 0 15 15" shape-rendering="crispEdges"><rect x="0.5" y="0.5" width="14" height="14" rx="2" fill="#c4d3f8" stroke="#dfe8fd" shape-rendering="auto"/><path d="M3.8 9.5l3.7-3.7 3.7 3.7" stroke="#4d6185" stroke-width="2.2" fill="none" shape-rendering="auto"/></svg>
<div style="left:383px;top:160px;width:15px;height:434px;background:linear-gradient(90deg,#b9cbf7,#c8d7fb 45%,#b5c8f5);border:1px solid #e3ebfd;border-radius:2px"></div>
<div style="left:386px;top:372px;width:7px;height:1px;background:#eef3fe;"></div>
<div style="left:387px;top:373px;width:7px;height:1px;background:#8ea8e6;"></div>
<div style="left:386px;top:374px;width:7px;height:1px;background:#eef3fe;"></div>
<div style="left:387px;top:375px;width:7px;height:1px;background:#8ea8e6;"></div>
<div style="left:386px;top:376px;width:7px;height:1px;background:#eef3fe;"></div>
<div style="left:387px;top:377px;width:7px;height:1px;background:#8ea8e6;"></div>
<div style="left:386px;top:378px;width:7px;height:1px;background:#eef3fe;"></div>
<div style="left:387px;top:379px;width:7px;height:1px;background:#8ea8e6;"></div>
<div style="left:399px;top:128px;width:4px;height:509px;background:#ece9d8;"></div>
<div style="left:0px;top:141px;width:399px;height:1px;background:#8f8c7e;"></div>
<svg style="left:399px;top:335px;" width="5" height="10" viewBox="0 0 5 10" shape-rendering="crispEdges"><path d="M4 0.5H1.5V8.5H4" stroke="#000" stroke-width="1.5" fill="none"/></svg>
<div style="left:403px;top:128px;width:842px;height:509px;background:#fff;border-left:1px solid #000;border-top:1px solid #000"></div>
<div style="left:404px;top:129px;width:39px;height:508px;background:#ece9d8;"></div>
<div style="left:443px;top:129px;width:1px;height:508px;background:#aca899;"></div>
<svg style="left:0;top:0" width="1245" height="637" viewBox="0 0 1245 637" shape-rendering="crispEdges" font-family="Liberation Sans, sans-serif"><defs><clipPath id="lc"><rect x="404" y="129" width="841" height="508"/></clipPath></defs><g clip-path="url(#lc)"><rect x="451" y="129" width="1" height="1" fill="#000080"/><rect x="451" y="183" width="1" height="1" fill="#000080"/><rect x="451" y="237" width="1" height="1" fill="#000080"/><rect x="451" y="291" width="1" height="1" fill="#000080"/><rect x="451" y="345" width="1" height="1" fill="#000080"/><rect x="451" y="399" width="1" height="1" fill="#000080"/><rect x="451" y="453" width="1" height="1" fill="#000080"/><rect x="451" y="507" width="1" height="1" fill="#000080"/><rect x="451" y="561" width="1" height="1" fill="#000080"/><rect x="451" y="615" width="1" height="1" fill="#000080"/><rect x="522" y="129" width="1" height="1" fill="#000080"/><rect x="522" y="183" width="1" height="1" fill="#000080"/><rect x="522" y="237" width="1" height="1" fill="#000080"/><rect x="522" y="291" width="1" height="1" fill="#000080"/><rect x="522" y="345" width="1" height="1" fill="#000080"/><rect x="522" y="399" width="1" height="1" fill="#000080"/><rect x="522" y="453" width="1" height="1" fill="#000080"/><rect x="522" y="507" width="1" height="1" fill="#000080"/><rect x="522" y="561" width="1" height="1" fill="#000080"/><rect x="522" y="615" width="1" height="1" fill="#000080"/><rect x="593" y="129" width="1" height="1" fill="#000080"/><rect x="593" y="183" width="1" height="1" fill="#000080"/><rect x="593" y="237" width="1" height="1" fill="#000080"/><rect x="593" y="291" width="1" height="1" fill="#000080"/><rect x="593" y="345" width="1" height="1" fill="#000080"/><rect x="593" y="399" width="1" height="1" fill="#000080"/><rect x="593" y="453" width="1" height="1" fill="#000080"/><rect x="593" y="507" width="1" height="1" fill="#000080"/><rect x="593" y="561" width="1" height="1" fill="#000080"/><rect x="593" y="615" width="1" height="1" fill="#000080"/><rect x="664" y="129" width="1" height="1" fill="#000080"/><rect x="664" y="183" width="1" height="1" fill="#000080"/><rect x="664" y="237" width="1" height="1" fill="#000080"/><rect x="664" y="291" width="1" height="1" fill="#000080"/><rect x="664" y="345" width="1" height="1" fill="#000080"/><rect x="664" y="399" width="1" height="1" fill="#000080"/><rect x="664" y="453" width="1" height="1" fill="#000080"/><rect x="664" y="507" width="1" height="1" fill="#000080"/><rect x="664" y="561" width="1" height="1" fill="#000080"/><rect x="664" y="615" width="1" height="1" fill="#000080"/><rect x="735" y="129" width="1" height="1" fill="#000080"/><rect x="735" y="183" width="1" height="1" fill="#000080"/><rect x="735" y="237" width="1" height="1" fill="#000080"/><rect x="735" y="291" width="1" height="1" fill="#000080"/><rect x="735" y="345" width="1" height="1" fill="#000080"/><rect x="735" y="399" width="1" height="1" fill="#000080"/><rect x="735" y="453" width="1" height="1" fill="#000080"/><rect x="735" y="507" width="1" height="1" fill="#000080"/><rect x="735" y="561" width="1" height="1" fill="#000080"/><rect x="735" y="615" width="1" height="1" fill="#000080"/><rect x="806" y="129" width="1" height="1" fill="#000080"/><rect x="806" y="183" width="1" height="1" fill="#000080"/><rect x="806" y="237" width="1" height="1" fill="#000080"/><rect x="806" y="291" width="1" height="1" fill="#000080"/><rect x="806" y="345" width="1" height="1" fill="#000080"/><rect x="806" y="399" width="1" height="1" fill="#000080"/><rect x="806" y="453" width="1" height="1" fill="#000080"/><rect x="806" y="507" width="1" height="1" fill="#000080"/><rect x="806" y="561" width="1" height="1" fill="#000080"/><rect x="806" y="615" width="1" height="1" fill="#000080"/><rect x="877" y="129" width="1" height="1" fill="#000080"/><rect x="877" y="183" width="1" height="1" fill="#000080"/><rect x="877" y="237" width="1" height="1" fill="#000080"/><rect x="877" y="291" width="1" height="1" fill="#000080"/><rect x="877" y="345" width="1" height="1" fill="#000080"/><rect x="877" y="399" width="1" height="1" fill="#000080"/><rect x="877" y="453" width="1" height="1" fill="#000080"/><rect x="877" y="507" width="1" height="1" fill="#000080"/><rect x="877" y="561" width="1" height="1" fill="#000080"/><rect x="877" y="615" width="1" height="1" fill="#000080"/><rect x="948" y="129" width="1" height="1" fill="#000080"/><rect x="948" y="183" width="1" height="1" fill="#000080"/><rect x="948" y="237" width="1" height="1" fill="#000080"/><rect x="948" y="291" width="1" height="1" fill="#000080"/><rect x="948" y="345" width="1" height="1" fill="#000080"/><rect x="948" y="399" width="1" height="1" fill="#000080"/><rect x="948" y="453" width="1" height="1" fill="#000080"/><rect x="948" y="507" width="1" height="1" fill="#000080"/><rect x="948" y="561" width="1" height="1" fill="#000080"/><rect x="948" y="615" width="1" height="1" fill="#000080"/><rect x="1019" y="129" width="1" height="1" fill="#000080"/><rect x="1019" y="183" width="1" height="1" fill="#000080"/><rect x="1019" y="237" width="1" height="1" fill="#000080"/><rect x="1019" y="291" width="1" height="1" fill="#000080"/><rect x="1019" y="345" width="1" height="1" fill="#000080"/><rect x="1019" y="399" width="1" height="1" fill="#000080"/><rect x="1019" y="453" width="1" height="1" fill="#000080"/><rect x="1019" y="507" width="1" height="1" fill="#000080"/><rect x="1019" y="561" width="1" height="1" fill="#000080"/><rect x="1019" y="615" width="1" height="1" fill="#000080"/><rect x="1090" y="129" width="1" height="1" fill="#000080"/><rect x="1090" y="183" width="1" height="1" fill="#000080"/><rect x="1090" y="237" width="1" height="1" fill="#000080"/><rect x="1090" y="291" width="1" height="1" fill="#000080"/><rect x="1090" y="345" width="1" height="1" fill="#000080"/><rect x="1090" y="399" width="1" height="1" fill="#000080"/><rect x="1090" y="453" width="1" height="1" fill="#000080"/><rect x="1090" y="507" width="1" height="1" fill="#000080"/><rect x="1090" y="561" width="1" height="1" fill="#000080"/><rect x="1090" y="615" width="1" height="1" fill="#000080"/><rect x="1161" y="129" width="1" height="1" fill="#000080"/><rect x="1161" y="183" width="1" height="1" fill="#000080"/><rect x="1161" y="237" width="1" height="1" fill="#000080"/><rect x="1161" y="291" width="1" height="1" fill="#000080"/><rect x="1161" y="345" width="1" height="1" fill="#000080"/><rect x="1161" y="399" width="1" height="1" fill="#000080"/><rect x="1161" y="453" width="1" height="1" fill="#000080"/><rect x="1161" y="507" width="1" height="1" fill="#000080"/><rect x="1161" y="561" width="1" height="1" fill="#000080"/><rect x="1161" y="615" width="1" height="1" fill="#000080"/><rect x="1232" y="129" width="1" height="1" fill="#000080"/><rect x="1232" y="183" width="1" height="1" fill="#000080"/><rect x="1232" y="237" width="1" height="1" fill="#000080"/><rect x="1232" y="291" width="1" height="1" fill="#000080"/><rect x="1232" y="345" width="1" height="1" fill="#000080"/><rect x="1232" y="399" width="1" height="1" fill="#000080"/><rect x="1232" y="453" width="1" height="1" fill="#000080"/><rect x="1232" y="507" width="1" height="1" fill="#000080"/><rect x="1232" y="561" width="1" height="1" fill="#000080"/><rect x="1232" y="615" width="1" height="1" fill="#000080"/><rect x="449" y="129" width="2" height="508" fill="#000"/><rect x="1230" y="129" width="1" height="508" fill="#000"/><rect x="405.5" y="130.5" width="36" height="23" rx="1.5" fill="#fffde8" stroke="#f39a55" shape-rendering="auto"/><text x="406.4" y="141" fill="#660066" font-size="10" textLength="27.6" lengthAdjust="spacing" stroke="#660066" stroke-width="0.2">N087</text><rect x="405.5" y="184.5" width="36" height="23" rx="1.5" fill="#fffde8" stroke="#f39a55" shape-rendering="auto"/><text x="406.4" y="195" fill="#660066" font-size="10" textLength="27.6" lengthAdjust="spacing" stroke="#660066" stroke-width="0.2">N088</text><rect x="405.5" y="238.5" width="36" height="23" rx="1.5" fill="#fffde8" stroke="#f39a55" shape-rendering="auto"/><text x="406.4" y="249" fill="#660066" font-size="10" textLength="27.6" lengthAdjust="spacing" stroke="#660066" stroke-width="0.2">N089</text><rect x="405.5" y="346.5" width="36" height="23" rx="1.5" fill="#fffde8" stroke="#f39a55" shape-rendering="auto"/><text x="406.4" y="357" fill="#660066" font-size="10" textLength="27.6" lengthAdjust="spacing" stroke="#660066" stroke-width="0.2">N090</text><rect x="405.5" y="454.5" width="36" height="23" rx="1.5" fill="#fffde8" stroke="#f39a55" shape-rendering="auto"/><text x="406.4" y="465" fill="#660066" font-size="10" textLength="27.6" lengthAdjust="spacing" stroke="#660066" stroke-width="0.2">N091</text><rect x="405.5" y="562.5" width="36" height="23" rx="1.5" fill="#fffde8" stroke="#f39a55" shape-rendering="auto"/><text x="406.4" y="573" fill="#660066" font-size="10" textLength="27.6" lengthAdjust="spacing" stroke="#660066" stroke-width="0.2">N092</text><rect x="451" y="150" width="35" height="1" fill="#000"/><rect x="486.5" y="138.5" width="143" height="42" rx="1.5" fill="#f9f9ec" stroke="#000" shape-rendering="auto"/><rect x="539" y="139" width="1" height="41" fill="#000"/><rect x="505" y="133" width="16" height="7" fill="#f9f9ec"/><text x="506.4" y="142.5" fill="#0000d0" font-size="11" textLength="13.6" lengthAdjust="spacing" stroke="#0000d0" stroke-width="0.12">65</text><text x="501.4" y="163.5" fill="#0000d0" font-size="11" textLength="21.6" lengthAdjust="spacing" stroke="#0000d0" stroke-width="0.12">LBL</text><text x="570.4" y="163.5" fill="#0000d0" font-size="11" textLength="28.6" lengthAdjust="spacing" stroke="#0000d0" stroke-width="0.12">LAMP</text><rect x="451" y="204" width="779" height="1" fill="#000"/><rect x="480" y="198" width="2" height="12" fill="#000"/><rect x="493" y="198" width="2" height="12" fill="#000"/><rect x="482" y="198" width="11" height="12" fill="#fff"/><path d="M483 209.5L491.5 199.5" stroke="#000" stroke-width="1.3" shape-rendering="auto"/><text x="476.4" y="194.5" fill="#0000d0" font-size="11" textLength="21.6" lengthAdjust="spacing" stroke="#0000d0" stroke-width="0.12">X22</text><text x="458.4" y="220" fill="#800080" font-size="10" textLength="56.6" lengthAdjust="spacing" stroke="#800080" stroke-width="0.12">OVERLOAD</text><rect x="1187" y="198" width="20" height="12" fill="#fff"/><path d="M1190.5 199.5Q1186.5 204 1190.5 208.5M1203.5 199.5Q1207.5 204 1203.5 208.5" stroke="#000" stroke-width="2" fill="none" shape-rendering="auto"/><text x="1186.4" y="194.5" fill="#0000d0" font-size="11" textLength="21.6" lengthAdjust="spacing" stroke="#0000d0" stroke-width="0.12">M86</text><rect x="451" y="258" width="779" height="1" fill="#000"/><rect x="480" y="252" width="2" height="12" fill="#000"/><rect x="493" y="252" width="2" height="12" fill="#000"/><rect x="482" y="252" width="11" height="12" fill="#fff"/><text x="472.4" y="248.5" fill="#0000d0" font-size="11" textLength="27.6" lengthAdjust="spacing" stroke="#0000d0" stroke-width="0.12">M673</text><text x="465.4" y="274" fill="#800080" font-size="10" textLength="41.6" lengthAdjust="spacing" stroke="#800080" stroke-width="0.12">R451=2</text><rect x="551" y="252" width="2" height="12" fill="#000"/><rect x="564" y="252" width="2" height="12" fill="#000"/><rect x="553" y="252" width="11" height="12" fill="#fff"/><path d="M554 263.5L562.5 253.5" stroke="#000" stroke-width="1.3" shape-rendering="auto"/><text x="543.4" y="248.5" fill="#0000d0" font-size="11" textLength="27.6" lengthAdjust="spacing" stroke="#0000d0" stroke-width="0.12">M204</text><rect x="593" y="258" width="1" height="55" fill="#000"/><rect x="451" y="312" width="142" height="1" fill="#000"/><rect x="480" y="306" width="2" height="12" fill="#000"/><rect x="493" y="306" width="2" height="12" fill="#000"/><rect x="482" y="306" width="11" height="12" fill="#fff"/><text x="472.4" y="302.5" fill="#0000d0" font-size="11" textLength="27.6" lengthAdjust="spacing" stroke="#0000d0" stroke-width="0.12">M671</text><text x="465.4" y="328" fill="#800080" font-size="10" textLength="41.6" lengthAdjust="spacing" stroke="#800080" stroke-width="0.12">R451=0</text><rect x="1187" y="252" width="20" height="12" fill="#fff"/><path d="M1190.5 253.5Q1186.5 258 1190.5 262.5M1203.5 253.5Q1207.5 258 1203.5 262.5" stroke="#000" stroke-width="2" fill="none" shape-rendering="auto"/><text x="1182.4" y="248.5" fill="#0000d0" font-size="11" textLength="27.6" lengthAdjust="spacing" stroke="#0000d0" stroke-width="0.12">M172</text><rect x="451" y="366" width="779" height="1" fill="#000"/><rect x="480" y="360" width="2" height="12" fill="#000"/><rect x="493" y="360" width="2" height="12" fill="#000"/><rect x="482" y="360" width="11" height="12" fill="#fff"/><text x="472.4" y="356.5" fill="#0000d0" font-size="11" textLength="27.6" lengthAdjust="spacing" stroke="#0000d0" stroke-width="0.12">M673</text><text x="465.4" y="382" fill="#800080" font-size="10" textLength="41.6" lengthAdjust="spacing" stroke="#800080" stroke-width="0.12">R451=2</text><rect x="551" y="360" width="2" height="12" fill="#000"/><rect x="564" y="360" width="2" height="12" fill="#000"/><rect x="553" y="360" width="11" height="12" fill="#fff"/><text x="543.4" y="356.5" fill="#0000d0" font-size="11" textLength="27.6" lengthAdjust="spacing" stroke="#0000d0" stroke-width="0.12">M204</text><rect x="593" y="366" width="1" height="55" fill="#000"/><rect x="451" y="420" width="142" height="1" fill="#000"/><rect x="480" y="414" width="2" height="12" fill="#000"/><rect x="493" y="414" width="2" height="12" fill="#000"/><rect x="482" y="414" width="11" height="12" fill="#fff"/><text x="472.4" y="410.5" fill="#0000d0" font-size="11" textLength="27.6" lengthAdjust="spacing" stroke="#0000d0" stroke-width="0.12">M672</text><text x="465.4" y="436" fill="#800080" font-size="10" textLength="41.6" lengthAdjust="spacing" stroke="#800080" stroke-width="0.12">R451=1</text><rect x="1187" y="360" width="20" height="12" fill="#fff"/><path d="M1190.5 361.5Q1186.5 366 1190.5 370.5M1203.5 361.5Q1207.5 366 1203.5 370.5" stroke="#000" stroke-width="2" fill="none" shape-rendering="auto"/><text x="1182.4" y="356.5" fill="#0000d0" font-size="11" textLength="27.6" lengthAdjust="spacing" stroke="#0000d0" stroke-width="0.12">M173</text><rect x="451" y="474" width="509" height="1" fill="#000"/><rect x="974" y="474" width="9" height="1" fill="#000"/><text x="960.4" y="476.5" fill="#dd0000" font-size="11" textLength="13.6" lengthAdjust="spacing" stroke="#dd0000" stroke-width="0.12">EN</text><rect x="983.5" y="462.5" width="143" height="96" rx="1.5" fill="#f9f9ec" stroke="#000" shape-rendering="auto"/><rect x="1033" y="457" width="44" height="7" fill="#f9f9ec"/><text x="1033.4" y="466.5" fill="#0000d0" font-size="11" textLength="42.6" lengthAdjust="spacing" stroke="#0000d0" stroke-width="0.12">08.MOV</text><text x="999.4" y="477.5" fill="#0000d0" font-size="11" textLength="18.6" lengthAdjust="spacing" stroke="#0000d0" stroke-width="0.12">S :</text><text x="1063.4" y="477.5" fill="#0000d0" font-size="11" textLength="35.6" lengthAdjust="spacing" stroke="#0000d0" stroke-width="0.12">WM160</text><text x="999.4" y="503.5" fill="#0000d0" font-size="11" textLength="18.6" lengthAdjust="spacing" stroke="#0000d0" stroke-width="0.12">D :</text><text x="1070.4" y="503.5" fill="#0000d0" font-size="11" textLength="20.6" lengthAdjust="spacing" stroke="#0000d0" stroke-width="0.12">R42</text><rect x="451" y="582" width="509" height="1" fill="#000"/><rect x="974" y="582" width="9" height="1" fill="#000"/><rect x="877" y="582" width="1" height="55" fill="#000"/><text x="960.4" y="584.5" fill="#dd0000" font-size="11" textLength="13.6" lengthAdjust="spacing" stroke="#dd0000" stroke-width="0.12">EN</text><rect x="983.5" y="570.5" width="143" height="120" rx="1.5" fill="#f9f9ec" stroke="#000" shape-rendering="auto"/><rect x="1033" y="565" width="44" height="7" fill="#f9f9ec"/><text x="1033.4" y="574.5" fill="#0000d0" font-size="11" textLength="42.6" lengthAdjust="spacing" stroke="#0000d0" stroke-width="0.12">17.CMP</text><text x="999.4" y="584.5" fill="#0000d0" font-size="11" textLength="18.6" lengthAdjust="spacing" stroke="#0000d0" stroke-width="0.12">Sa:</text><text x="1063.4" y="584.5" fill="#0000d0" font-size="11" textLength="34.6" lengthAdjust="spacing" stroke="#0000d0" stroke-width="0.12">R2000</text><text x="999.4" y="611.5" fill="#0000d0" font-size="11" textLength="18.6" lengthAdjust="spacing" stroke="#0000d0" stroke-width="0.12">Sb:</text><text x="1078.4" y="611.5" fill="#0000d0" font-size="11" textLength="5.6" lengthAdjust="spacing" stroke="#0000d0" stroke-width="0.12">5</text><rect x="1127" y="582" width="7" height="1" fill="#000"/><rect x="1153" y="582" width="9" height="1" fill="#000"/><text x="1133.4" y="586" fill="#800080" font-size="10" textLength="19.6" lengthAdjust="spacing" stroke="#800080" stroke-width="0.12">a=b</text><rect x="1127" y="636" width="7" height="1" fill="#000"/><rect x="1153" y="636" width="9" height="1" fill="#000"/><text x="1133.4" y="640" fill="#800080" font-size="10" textLength="19.6" lengthAdjust="spacing" stroke="#800080" stroke-width="0.12">a&gt;b</text><rect x="1162" y="400" width="69" height="53" fill="#0050e0"/><rect x="1230" y="400" width="1" height="53" fill="#7fffff"/></g></svg></body></html>
